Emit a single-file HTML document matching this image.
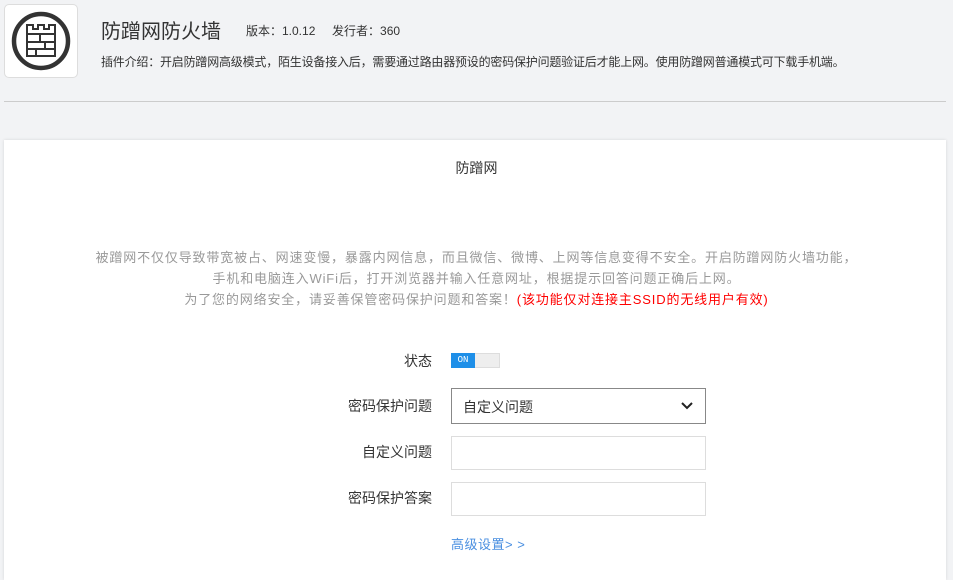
<!DOCTYPE html>
<html><head><meta charset="utf-8"><style>
*{margin:0;padding:0;box-sizing:border-box}
body{width:953px;height:572px;overflow:hidden;background:#f2f3f5;font-family:"Liberation Sans","Noto Sans CJK SC",sans-serif;color:#333;position:relative}
.abs{position:absolute;white-space:nowrap}
.logo{left:4px;top:4px;width:74px;height:74px;background:#fff;border:1px solid #ddd;border-radius:5px}
.card{left:4px;top:140px;width:942px;height:440px;background:#fff;box-shadow:0 0 3px rgba(0,0,0,.12)}
.desc{left:0;width:953px;text-align:center;font-size:13px;letter-spacing:0.85px;color:#999}
.lbl{font-size:14px;color:#333;text-align:right;width:120px;left:312px}
.inp{left:451px;width:255px;height:34px;border:1px solid #ddd;background:#fff}
</style></head><body>
<div class="abs logo">
<svg width="74" height="74" viewBox="0 0 74 74">
<circle cx="36" cy="36" r="27" fill="none" stroke="#333" stroke-width="4.5"/>
<path d="M22 20h6v4h5v-4h6v4h5v-4h6v31H22z" fill="none" stroke="#333" stroke-width="2"/>
<path d="M22 29h28M22 37h28M22 44h28M35 29v8M40 37v7M31 44v7" stroke="#333" stroke-width="2" fill="none"/>
</svg></div>
<div class="abs" style="left:101px;top:15px;font-size:20px;color:#333">防蹭网防火墙</div>
<div class="abs" style="left:246px;top:22px;font-size:12px;color:#333">版本：1.0.12&nbsp;&nbsp;&nbsp;&nbsp;&nbsp;发行者：360</div>
<div class="abs" style="left:101px;top:53px;font-size:12px;color:#333;letter-spacing:-0.2px">插件介绍：开启防蹭网高级模式，陌生设备接入后，需要通过路由器预设的密码保护问题验证后才能上网。使用防蹭网普通模式可下载手机端。</div>
<div class="abs" style="left:4px;top:101px;width:942px;height:1px;background:#ccc"></div>
<div class="abs card"></div>
<div class="abs" style="left:0;width:953px;top:158px;text-align:center;font-size:14px;color:#333">防蹭网</div>
<div class="abs desc" style="top:247px">被蹭网不仅仅导致带宽被占、网速变慢，暴露内网信息，而且微信、微博、上网等信息变得不安全。开启防蹭网防火墙功能，</div>
<div class="abs desc" style="top:268px">手机和电脑连入WiFi后，打开浏览器并输入任意网址，根据提示回答问题正确后上网。</div>
<div class="abs desc" style="top:289px">为了您的网络安全，请妥善保管密码保护问题和答案！<span style="color:#f00">(该功能仅对连接主SSID的无线用户有效)</span></div>
<div class="abs lbl" style="top:351px">状态</div>
<div class="abs" style="left:451px;top:353px;width:49px;height:15px;background:#eee;border:1px solid #ddd"></div>
<div class="abs" style="left:451px;top:353px;width:24px;height:15px;background:#1e8fe8;color:#fff;font-size:9px;font-family:'Liberation Mono',monospace;line-height:15px;text-align:center">ON</div>
<div class="abs lbl" style="top:396px">密码保护问题</div>
<div class="abs inp" style="top:388px;height:36px;border:1px solid #888;font-size:14px;padding:8px 0 0 11px">自定义问题
<svg style="position:absolute;right:12px;top:13px" width="12" height="8" viewBox="0 0 12 8"><path d="M1 1l5 5 5-5" fill="none" stroke="#222" stroke-width="2"/></svg></div>
<div class="abs lbl" style="top:442px">自定义问题</div>
<div class="abs inp" style="top:436px"></div>
<div class="abs lbl" style="top:488px">密码保护答案</div>
<div class="abs inp" style="top:482px"></div>
<div class="abs" style="left:451px;top:534px;font-size:13px;color:#4a8fe0;letter-spacing:0.5px">高级设置&gt; &gt;</div>
</body></html>
